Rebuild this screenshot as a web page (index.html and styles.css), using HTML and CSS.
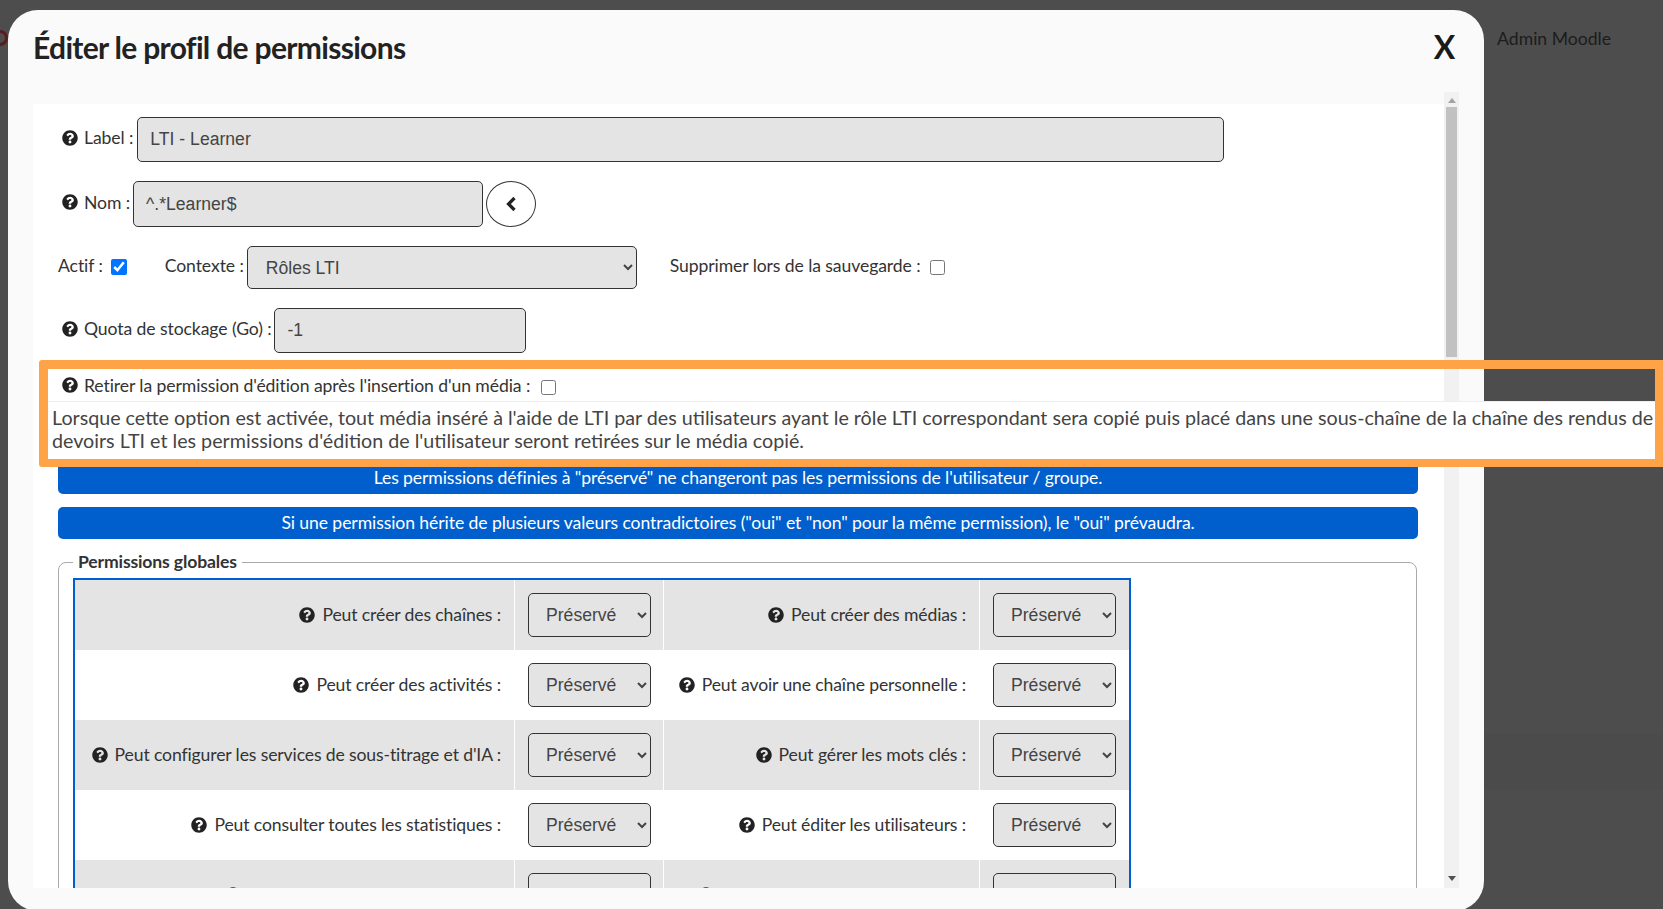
FILE: index.html
```html
<!DOCTYPE html>
<html lang="fr">
<head>
<meta charset="utf-8">
<title>Éditer le profil de permissions</title>
<link rel="stylesheet" href="styles.css">
</head>
<body>
<svg class="defs" width="0" height="0" aria-hidden="true">
  <symbol id="q" viewBox="0 0 512 512"><path d="M504 256c0 136.997-111.043 248-248 248S8 392.997 8 256C8 119.083 119.043 8 256 8s248 111.083 248 248zM262.655 90c-54.497 0-89.255 22.957-116.549 63.758-3.536 5.286-2.353 12.415 2.715 16.258l34.699 26.31c5.205 3.947 12.621 3.008 16.665-2.122 17.864-22.658 30.113-35.797 57.303-35.797 20.429 0 45.698 13.148 45.698 32.958 0 14.976-12.363 22.667-32.534 33.976C247.128 238.528 216 254.941 216 296v4c0 6.627 5.373 12 12 12h56c6.627 0 12-5.373 12-12v-1.333c0-28.462 83.186-29.647 83.186-106.667 0-58.002-60.165-102-116.531-102zM256 338c-25.365 0-46 20.635-46 46 0 25.364 20.635 46 46 46s46-20.636 46-46c0-25.365-20.635-46-46-46z"/></symbol>
</svg>

<header class="page-head">
  <span class="logo-ring"></span>
  <span class="user">Admin Moodle</span>
</header>
<div class="page-band"></div>

<div class="modal">
  <div class="modal-head">
    <h1 class="modal-title">Éditer le profil de permissions</h1>
    <span class="modal-close">X</span>
  </div>
  <div class="modal-body">
    <div class="content">
      <div class="field f-label">
        <svg class="qi"><use href="#q"/></svg><label>Label :</label>
        <input class="txt w-label" type="text" value="LTI - Learner">
      </div>
      <div class="field f-nom">
        <svg class="qi"><use href="#q"/></svg><label>Nom :</label>
        <input class="txt w-nom" type="text" value="^.*Learner$">
        <button class="round" type="button"><svg width="12" height="16" viewBox="0 0 12 16"><path d="M9.5 2 3.5 8l6 6" fill="none" stroke="#222" stroke-width="3.2"/></svg></button>
      </div>
      <div class="field f-ctx">
        <label>Actif :</label>
        <input class="check check-lg" type="checkbox" checked>
        <label class="ctx-label">Contexte :</label>
        <select class="sel w-ctx"><option>Rôles LTI</option></select>
        <label class="del-label">Supprimer lors de la sauvegarde :</label>
        <input class="check check-del" type="checkbox">
      </div>
      <div class="field f-quota">
        <svg class="qi"><use href="#q"/></svg><label>Quota de stockage (Go) :</label>
        <input class="txt w-quota" type="text" value="-1">
      </div>
      <div class="field f-strip">
        <svg class="qi"><use href="#q"/></svg><label>Retirer la permission d'édition après l'insertion d'un média :</label>
        <input class="check check-strip" type="checkbox">
      </div>
      <div class="notice n1">Les permissions définies à "préservé" ne changeront pas les permissions de l'utilisateur / groupe.</div>
      <div class="notice n2">Si une permission hérite de plusieurs valeurs contradictoires ("oui" et "non" pour la même permission), le "oui" prévaudra.</div>
      <fieldset class="group">
        <legend>Permissions globales</legend>
        <table class="perms">
          <tr>
            <td class="l"><svg class="qi"><use href="#q"/></svg>Peut créer des chaînes :</td>
            <td class="s"><select class="sel pres"><option>Préservé</option></select></td>
            <td class="l"><svg class="qi"><use href="#q"/></svg>Peut créer des médias :</td>
            <td class="s"><select class="sel pres"><option>Préservé</option></select></td>
          </tr>
          <tr>
            <td class="l"><svg class="qi"><use href="#q"/></svg>Peut créer des activités :</td>
            <td class="s"><select class="sel pres"><option>Préservé</option></select></td>
            <td class="l"><svg class="qi"><use href="#q"/></svg>Peut avoir une chaîne personnelle :</td>
            <td class="s"><select class="sel pres"><option>Préservé</option></select></td>
          </tr>
          <tr>
            <td class="l"><svg class="qi"><use href="#q"/></svg>Peut configurer les services de sous-titrage et d'IA :</td>
            <td class="s"><select class="sel pres"><option>Préservé</option></select></td>
            <td class="l"><svg class="qi"><use href="#q"/></svg>Peut gérer les mots clés :</td>
            <td class="s"><select class="sel pres"><option>Préservé</option></select></td>
          </tr>
          <tr>
            <td class="l"><svg class="qi"><use href="#q"/></svg>Peut consulter toutes les statistiques :</td>
            <td class="s"><select class="sel pres"><option>Préservé</option></select></td>
            <td class="l"><svg class="qi"><use href="#q"/></svg>Peut éditer les utilisateurs :</td>
            <td class="s"><select class="sel pres"><option>Préservé</option></select></td>
          </tr>
          <tr>
            <td class="l"><svg class="qi"><use href="#q"/></svg>Peut télécharger tous les médias :</td>
            <td class="s"><select class="sel pres"><option>Préservé</option></select></td>
            <td class="l"><svg class="qi"><use href="#q"/></svg>Peut supprimer tous les médias :</td>
            <td class="s"><select class="sel pres"><option>Préservé</option></select></td>
          </tr>
        </table>
      </fieldset>
    </div>
    <div class="scrollbar">
      <span class="arrow-up"></span>
      <span class="thumb"></span>
      <span class="arrow-down"></span>
    </div>
  </div>
</div>

<div class="highlight">
  <div class="tip">Lorsque cette option est activée, tout média inséré à l'aide de LTI par des utilisateurs ayant le rôle LTI correspondant sera copié puis placé dans une sous-chaîne de la chaîne des rendus de devoirs LTI et les permissions d'édition de l'utilisateur seront retirées sur le média copié.</div>
</div>
</body>
</html>
```
FILE: styles.css
```css
* { box-sizing: border-box; }
html, body { margin: 0; height: 100%; }
body {
  background: #4d4d4d;
  font-family: "Lato", "Liberation Sans", sans-serif;
  font-size: 17.6px;
  letter-spacing: -0.09px;
  color: #333;
  overflow: hidden;
  position: relative;
}
.defs { position: absolute; }

/* page behind the modal */
.page-head {
  display: flex;
  justify-content: space-between;
  align-items: center;
  height: 76px;
  padding: 0 52px 0 0;
}
.logo-ring {
  width: 16px;
  height: 16px;
  margin-left: -8px;
  border: 3px solid #5a1c1c;
  border-radius: 50%;
}
.user { color: #1c1c1c; font-size: 17.6px; letter-spacing: 0; }
.page-band {
  margin: 657px 0 0 1484px;
  height: 57px;
  background: #4b4b4b;
}

/* modal */
.modal {
  position: absolute;
  top: 10px;
  left: 8px;
  width: 1476px;
  height: 901px;
  background: #fafafa;
  border-radius: 30px;
  overflow: hidden;
}
.modal-head {
  display: flex;
  justify-content: space-between;
  align-items: flex-start;
  height: 82px;
  padding: 0 29px 0 25px;
}
.modal-title {
  margin: 17px 0 0;
  font-size: 30px;
  letter-spacing: -0.68px;
  line-height: 40px;
  font-weight: 700;
  color: #222;
}
.modal-close {
  margin-top: 17px;
  font-size: 32px;
  line-height: 40px;
  font-weight: 700;
  color: #1a1a1a;
}
.modal-body {
  display: flex;
  height: 796px;
  margin: 0 25px;
}
.content {
  width: 1411px;
  margin-top: 12px;
  padding: 13px 0 0 25px;
  background: #fff;
  overflow: hidden;
}
.scrollbar {
  position: relative;
  width: 15px;
  background: #f1f1f1;
  display: flex;
  flex-direction: column;
  align-items: center;
}
.arrow-up {
  margin-top: 6px;
  border: 4px solid transparent;
  border-top: 0;
  border-bottom: 5px solid #a3a3a3;
}
.thumb {
  width: 11px;
  height: 250px;
  margin-top: 4px;
  background: #c1c1c1;
}
.arrow-down {
  position: absolute;
  bottom: 7px;
  border: 4px solid transparent;
  border-bottom: 0;
  border-top: 5px solid #505050;
}

/* form rows */
.field { display: flex; align-items: center; }
.field label { white-space: nowrap; position: relative; top: -2px; }
.f-label { height: 45px; margin-bottom: 19px; padding-left: 4px; }
.f-nom { height: 46px; margin-bottom: 19px; padding-left: 4px; }
.f-ctx { height: 43px; margin-bottom: 19px; }
.f-quota { height: 45px; margin-bottom: 24px; padding-left: 4px; }
.f-strip { height: 20px; margin-bottom: 65px; padding-left: 4px; }
.qi {
  flex: none;
  width: 16px;
  height: 16px;
  margin-right: 6px;
  fill: #222;
}
.field .qi { position: relative; top: -2px; }
.txt, .sel {
  border: 1px solid #333;
  border-radius: 5px;
  background-color: #e4e4e4;
  color: #444;
  font-family: "Liberation Sans", Arial, sans-serif;
  font-size: 17.6px;
  letter-spacing: 0;
}
.txt { height: 100%; padding: 0 12px; margin-left: 4px; }
.w-label { width: 1087px; }
.w-nom { width: 350px; margin-left: 3px; }
.w-quota { width: 252px; margin-left: 3px; }
.round {
  width: 50px;
  height: 46px;
  margin-left: 3px;
  padding: 0;
  display: flex;
  align-items: center;
  justify-content: center;
  border: 1px solid #333;
  border-radius: 50%;
  background: #fff;
}
.check { width: 15px; height: 15px; margin: 0 0 0 8px; flex: none; }
.check-lg { width: 16px; height: 16px; position: relative; top: -1px; }
.check-del { margin-left: 9px; }
.check-strip { margin-left: 11px; }
.ctx-label { margin-left: 38px; }
.sel { height: 100%; }
.w-ctx { width: 390px; margin-left: 3px; padding-left: 14px; }
.del-label { margin-left: 33px; }

/* notices */
.notice {
  width: 1360px;
  height: 32px;
  border-radius: 5px;
  background: #005fcc;
  color: #fff;
  text-align: center;
  line-height: 31px;
}
.n1 { margin-bottom: 13px; }

/* permission group */
.group {
  width: 1359px;
  margin: 13px 0 0;
  padding: 6px 14px 0;
  border: 1px solid #aaa;
  border-radius: 8px;
  min-inline-size: 0;
}
.group legend {
  margin-left: 0;
  padding: 0 5px;
  font-weight: 700;
  font-size: 17.6px;
  letter-spacing: -0.15px;
  line-height: 20px;
  color: #333;
}
.perms {
  width: 1056px;
  table-layout: fixed;
  border: 2px solid #005fcc;
  border-collapse: separate;
  border-spacing: 0;
}
.perms td { height: 70px; padding: 0; border-right: 1px solid #fff; }
.perms td:last-child { border-right: 0; }
.perms tr:nth-child(odd) td { background: #e4e4e4; }
.perms .l { width: 440px; padding: 0 13px 2px 0; text-align: right; white-space: nowrap; letter-spacing: -0.13px; }
.perms td:nth-child(3) { width: 316px; }
.perms .s { width: 149px; padding-left: 13px; }
.perms .qi { margin-right: 7px; vertical-align: -2px; }
.pres { width: 123px; height: 43.5px; padding-left: 13px; display: block; }

/* highlight overlay */
.highlight {
  position: absolute;
  top: 360px;
  left: 39px;
  width: 1624px;
  height: 107px;
  padding-top: 32px;
  border: solid #ffa348;
  border-width: 9px 8px 8px 9px;
  border-radius: 3px 0 0 3px;
}
.tip {
  height: 58px;
  padding: 5px 0 0 4px;
  background: #fff;
  border-top: 1px solid #eee;
  color: #444;
  font-size: 19.7px;
  letter-spacing: 0;
  line-height: 22.5px;
}
```
